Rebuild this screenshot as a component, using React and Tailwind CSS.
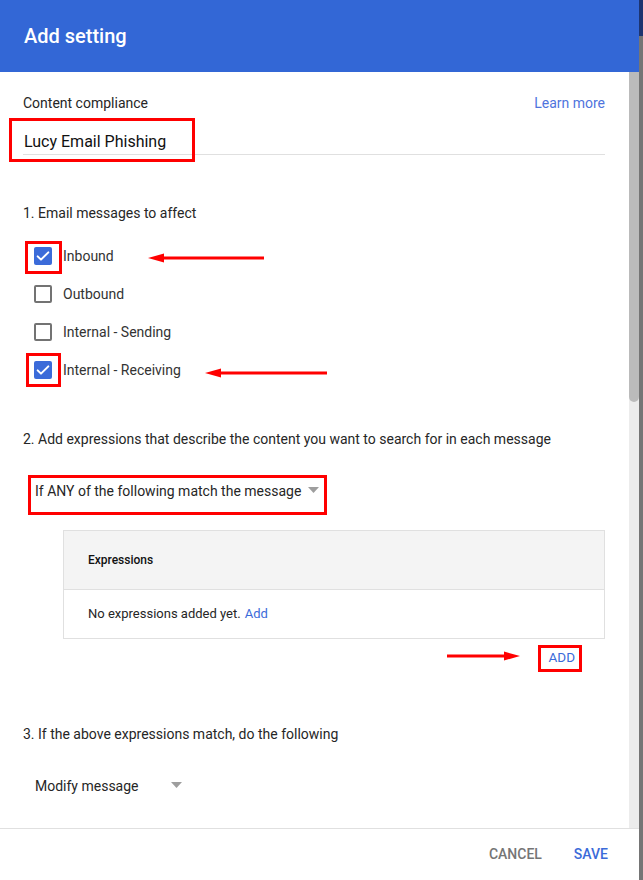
import React from 'react';

const font = { fontFamily: 'Roboto, "Noto Sans", sans-serif' };

function Checkbox({ checked }) {
  if (checked) {
    return (
      <span className="flex h-[18px] w-[18px] items-center justify-center rounded-[2px] bg-[#3b6bd9]">
        <svg width="16" height="16" viewBox="0 0 24 24" fill="none">
          <path d="M4 12.5l5 5L20 6.5" stroke="white" strokeWidth="3" strokeLinecap="round" strokeLinejoin="round" />
        </svg>
      </span>
    );
  }
  return <span className="block h-[18px] w-[18px] rounded-[2px] border-2 border-[#737373]" />;
}

function Caret() {
  return (
    <svg width="11" height="6" viewBox="0 0 11 6">
      <path d="M0 0h11L5.5 6z" fill="#9e9e9e" />
    </svg>
  );
}

function Arrow({ x, y, len, dir }) {
  // red annotation arrow drawn over the page
  const left = dir === 'left';
  return (
    <svg className="absolute" style={{ left: x, top: y - 6 }} width={len} height="12" viewBox={`0 0 ${len} 12`}>
      {left ? (
        <>
          <path d={`M12 6H${len}`} stroke="#f00" strokeWidth="3" />
          <path d="M0 6L16 1.5V10.5z" fill="#f00" />
        </>
      ) : (
        <>
          <path d={`M0 6H${len - 12}`} stroke="#f00" strokeWidth="3" />
          <path d={`M${len} 6L${len - 16} 1.5V10.5z`} fill="#f00" />
        </>
      )}
    </svg>
  );
}

export default function App() {
  const boxes = ['Inbound', 'Outbound', 'Internal - Sending', 'Internal - Receiving'];
  const checked = [true, false, false, true];

  return (
    <div className="relative flex h-[880px] w-[643px] overflow-hidden bg-white" style={font}>
      {/* Dialog */}
      <div className="flex w-[639px] flex-col">
        <header className="flex h-[72px] shrink-0 items-center bg-[#3367d6] px-6 text-[20px] font-medium text-white">
          Add setting
        </header>

        <div className="flex h-[756px]">
          <div className="flex-1 overflow-hidden pl-[23px] pr-[24px]">
            <div className="flex h-5 items-center justify-between mt-[21px] text-[14px]">
              <span className="text-[#262626]">Content compliance</span>
              <span className="text-[#4f74dd]">Learn more</span>
            </div>
            <div className="mt-[17px] h-[25px] border-b border-[#e0e0e0] pl-px text-[16px] leading-6 text-[#111]">
              Lucy Email Phishing
            </div>

            <div className="mt-[48px] h-5 text-[14px] leading-5 text-[#262626]">1. Email messages to affect</div>
            <div className="mt-[14px] flex flex-col">
              {boxes.map((b, i) => (
                <div key={b} className="flex h-[38px] items-center pl-[11px]">
                  <Checkbox checked={checked[i]} />
                  <span className="ml-[11px] text-[14px] text-[#333]">{b}</span>
                </div>
              ))}
            </div>

            <div className="mt-10 h-5 text-[14px] leading-5 text-[#262626]">
              2. Add expressions that describe the content you want to search for in each message
            </div>
            <div className="mt-8 flex h-5 items-center gap-[7px] pl-3 pt-px text-[14px] text-[#262626]">
              <span>If ANY of the following match the message</span>
              <span className="-mt-1"><Caret /></span>
            </div>

            <div className="ml-10 mt-[29px] border border-[#e0e0e0]">
              <div className="flex h-[58px] items-center bg-[#f4f4f4] px-6 text-[12px] font-medium text-[#111]">
                Expressions
              </div>
              <div className="flex h-[49px] items-center border-t border-[#e0e0e0] px-6 text-[13px] text-[#262626]">
                No expressions added yet.<span className="ml-1 text-[#3b6bd9]">Add</span>
              </div>
            </div>
            <div className="mt-2 flex h-5 justify-end pr-[30px]">
              <span className="text-[13.5px] text-[#3b6bd9]">ADD</span>
            </div>

            <div className="mt-[57px] h-5 text-[14px] leading-5 text-[#262626]">
              3. If the above expressions match, do the following
            </div>
            <div className="mt-8 flex h-5 items-center pl-3 pt-px text-[14px] text-[#262626]">
              <span>Modify message</span>
              <span className="-mt-1 ml-8"><Caret /></span>
            </div>
          </div>

          {/* Scrollbar */}
          <div className="w-[10px] bg-[#ececec]">
            <div className="h-[330px] rounded-b-full rounded-t-[5px] bg-[#bbb]" />
          </div>
        </div>

        <footer className="flex h-[52px] items-center justify-end gap-8 border-t border-[#e0e0e0] pr-[31px] text-[14px] font-medium">
          <span className="text-[#757575]">CANCEL</span>
          <span className="text-[#3b6bd9]">SAVE</span>
        </footer>
      </div>

      {/* Backdrop edge */}
      <div className="flex w-[4px] flex-col">
        <div className="h-[36px] bg-[#1d3470]" />
        <div className="flex-1 bg-[#757575]" />
      </div>

      {/* Annotations */}
      <div className="absolute left-[9px] top-[118px] h-[44px] w-[186px] border-[3px] border-[#f00]" />
      <div className="absolute left-[25px] top-[241px] h-[33px] w-[37px] border-[3px] border-[#f00]" />
      <div className="absolute left-[26px] top-[353px] h-[34px] w-[35px] border-[3px] border-[#f00]" />
      <div className="absolute left-[28px] top-[475px] h-[40px] w-[299px] border-[3px] border-[#f00]" />
      <div className="absolute left-[538px] top-[645px] h-[27px] w-[44px] border-[3px] border-[#f00]" />
      <Arrow x={148} y={258} len={116} dir="left" />
      <Arrow x={205} y={373} len={122} dir="left" />
      <Arrow x={447} y={656} len={73} dir="right" />
    </div>
  );
}
